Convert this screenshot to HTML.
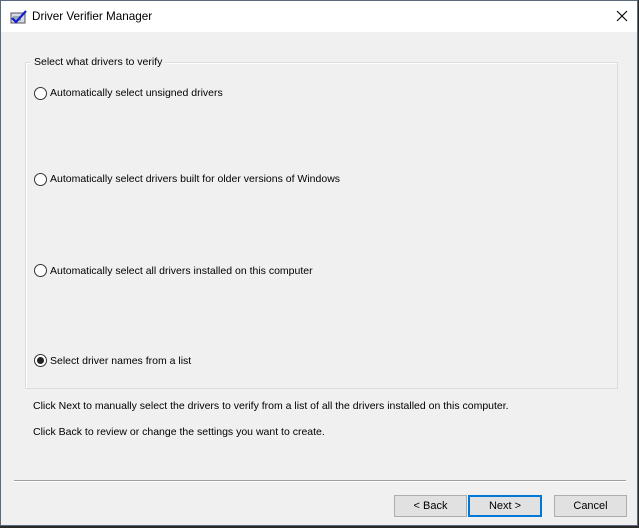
<!DOCTYPE html>
<html><head><meta charset="utf-8"><style>
*{margin:0;padding:0;box-sizing:border-box}
body{width:639px;height:528px;background:#2a2a2a;font-family:"Liberation Sans",sans-serif;font-size:10.5px;color:#000;position:relative;overflow:hidden}
.win{position:absolute;left:0;top:0;width:638px;height:526px;background:#f0f0f0;border:1px solid #5a6a7a}
.title{position:absolute;left:0;top:0;width:636px;height:31px;background:#fff}
.title span{position:absolute;left:31px;top:9px;font-size:11.7px}
.x{position:absolute;left:615px;top:9px}
.grp{position:absolute;left:24px;top:61px;width:593px;height:327px;border:1px solid #dcdcdc;box-shadow:inset 1px 1px 0 #fff}
.lg{position:absolute;left:30px;top:55px;background:#f0f0f0;padding:0 3px}
.t{position:absolute;white-space:nowrap}
.r{position:absolute;width:13px;height:13px;border:1px solid #333;border-radius:50%;background:#fff}
.r.on::after{content:"";position:absolute;left:2px;top:2px;width:7px;height:7px;border-radius:50%;background:#222}
.sep{position:absolute;left:13px;top:479px;width:612px;height:2px;border-top:1px solid #a0a0a0;border-bottom:1px solid #fff}
.b{position:absolute;top:494px;height:22px;background:#e1e1e1;border:1px solid #adadad;text-align:center;line-height:20px;font-size:11px}
</style></head><body>
<div class="win">
<div class="title">
<svg style="position:absolute;left:9px;top:9px" width="17" height="14" viewBox="0 0 17 14"><rect x="1" y="3" width="14" height="10" fill="#d8d8e8" stroke="#555"/><rect x="3" y="6" width="8" height="5" fill="#9aa"/><path d="M2 8 L6 12 L16 1" stroke="#1020d0" stroke-width="2.2" fill="none"/></svg>
<span>Driver Verifier Manager</span>
<svg class="x" width="12" height="12" viewBox="0 0 12 12"><path d="M1 1L11 11M11 1L1 11" stroke="#000" stroke-width="1.1"/></svg>
</div>
<div class="grp"></div>
<div class="t lg">Select what drivers to verify</div>
<div class="r" style="left:33px;top:86px"></div><div class="t" style="left:49px;top:86px">Automatically select unsigned drivers</div>
<div class="r" style="left:33px;top:172px"></div><div class="t" style="left:49px;top:172px">Automatically select drivers built for older versions of Windows</div>
<div class="r" style="left:33px;top:263px"></div><div class="t" style="left:49px;top:264px">Automatically select all drivers installed on this computer</div>
<div class="r on" style="left:33px;top:353px"></div><div class="t" style="left:49px;top:354px">Select driver names from a list</div>
<div class="t" style="left:32px;top:399px">Click Next to manually select the drivers to verify from a list of all the drivers installed on this computer.</div>
<div class="t" style="left:32px;top:425px">Click Back to review or change the settings you want to create.</div>
<div class="sep"></div>
<div class="b" style="left:393px;width:73px">&lt; Back</div>
<div class="b" style="left:467px;width:74px;border:2px solid #0078d7;line-height:18px">Next &gt;</div>
<div class="b" style="left:553px;width:73px">Cancel</div>
</div>
</body></html>
